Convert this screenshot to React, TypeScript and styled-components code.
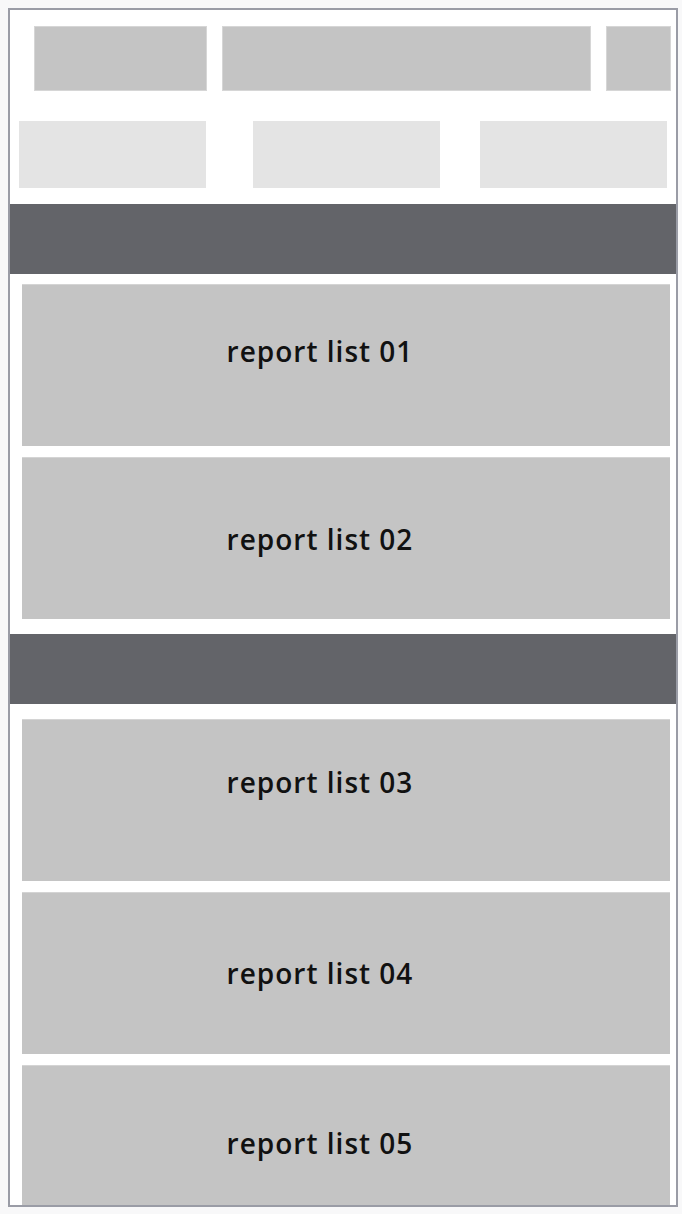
import React from 'react';
import styled, { createGlobalStyle } from 'styled-components';

const GlobalStyle = createGlobalStyle`
  body {
    margin: 0;
    background: #f8f8f9;
    font-family: 'Open Sans', 'Noto Sans', sans-serif;
  }
`;

const Frame = styled.div`
  margin: 8px;
  width: 670px;
  height: 1199px;
  box-sizing: border-box;
  border: 2px solid #9a9ca6;
  background: #fff;
  overflow: hidden;
`;

const TabRow = styled.div`
  display: flex;
  gap: 15px;
  padding: 16px 0 0 24px;
  overflow: hidden;
`;

const Tab = styled.div<{ $w: number }>`
  flex: 0 0 ${(p) => p.$w}px;
  height: 65px;
  background: #c4c4c4;
  border: 1px solid #d6d6d6;
  box-sizing: border-box;
`;

const FilterRow = styled.div`
  display: flex;
  justify-content: space-between;
  padding: 30px 9px 0 9px;
`;

const Filter = styled.div<{ $shift?: number }>`
  width: 187px;
  height: 67px;
  margin-left: ${(p) => p.$shift ?? 0}px;
  background: #e4e4e4;
`;

const SectionBar = styled.div<{ $top: number }>`
  height: 70px;
  margin-top: ${(p) => p.$top}px;
  background: #636469;
`;

const List = styled.div<{ $top: number }>`
  display: flex;
  flex-direction: column;
  gap: 11px;
  margin: ${(p) => p.$top}px 6px 0 12px;
`;

const ReportItem = styled.div<{ $lift?: number }>`
  height: 162px;
  background: #c4c4c4;
  border-top: 1px solid #d4d4d4;
  box-sizing: border-box;
  display: flex;
  align-items: center;
  justify-content: center;
  padding: 0 52px ${(p) => p.$lift ?? 0}px 0;
  font-size: 28px;
  font-weight: 600;
  color: #111;
  letter-spacing: 1px;
`;

function App() {
  return (
    <>
      <GlobalStyle />
      <Frame>
        <TabRow>
          <Tab $w={173} />
          <Tab $w={369} />
          <Tab $w={65} />
        </TabRow>
        <FilterRow>
          <Filter />
          <Filter $shift={6} />
          <Filter />
        </FilterRow>
        <SectionBar $top={16} />
        <List $top={10}>
          <ReportItem $lift={30}>report list 01</ReportItem>
          <ReportItem>report list 02</ReportItem>
        </List>
        <SectionBar $top={15} />
        <List $top={15}>
          <ReportItem $lift={38}>report list 03</ReportItem>
          <ReportItem $lift={2}>report list 04</ReportItem>
          <ReportItem $lift={8}>report list 05</ReportItem>
        </List>
      </Frame>
    </>
  );
}

export default App;
